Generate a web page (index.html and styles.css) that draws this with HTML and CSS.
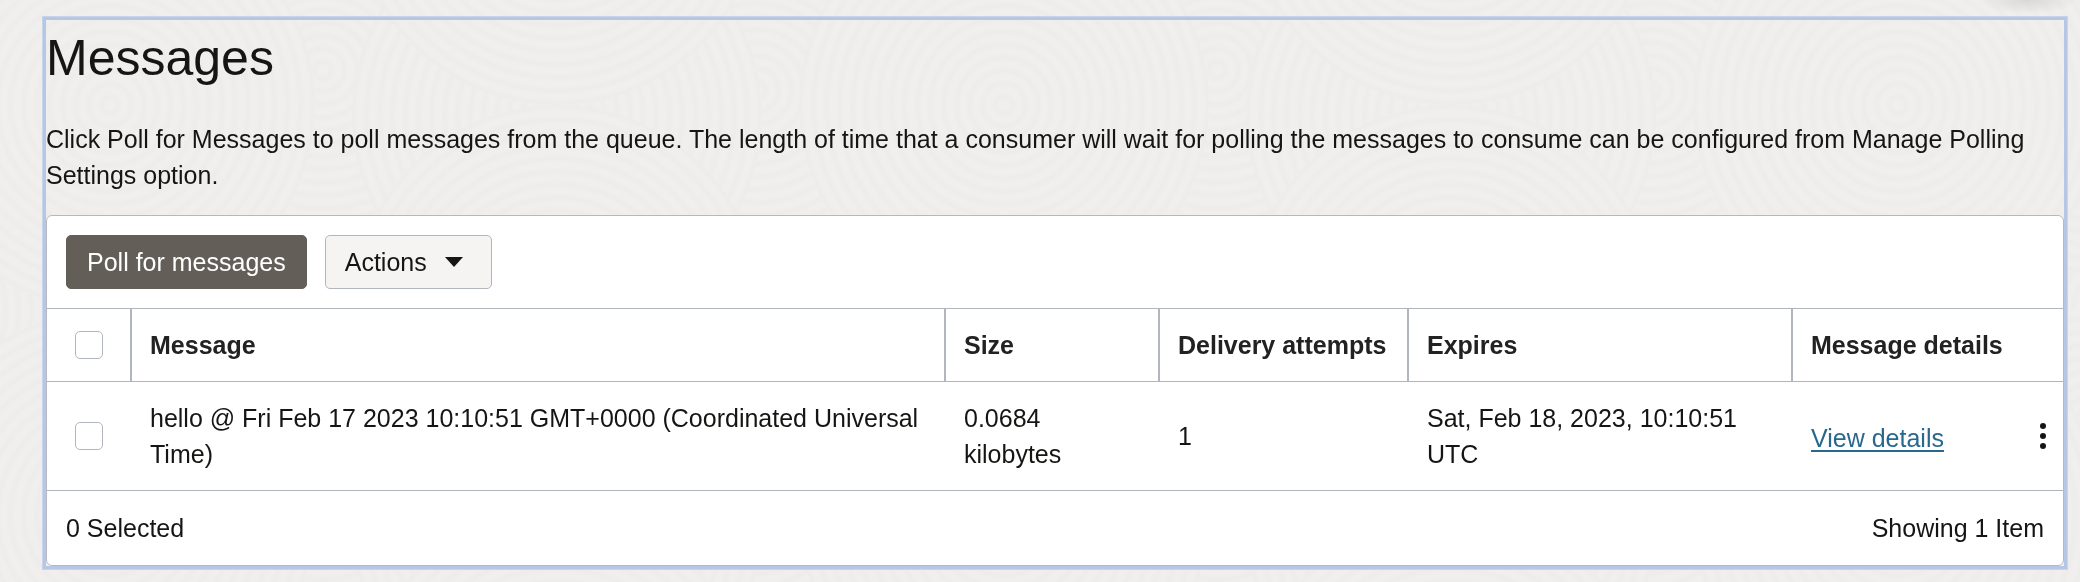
FILE: index.html
```html
<!DOCTYPE html>
<html lang="en">
<head>
<meta charset="utf-8">
<title>Messages</title>
<link rel="stylesheet" href="styles.css">
</head>
<body>
<svg class="texture" aria-hidden="true">
  <defs>
    <radialGradient id="ring" gradientUnits="userSpaceOnUse" cx="0" cy="0" r="13" spreadMethod="repeat">
      <stop offset="0" stop-color="#f0efed"/>
      <stop offset="0.3" stop-color="#f0efed"/>
      <stop offset="0.65" stop-color="#edecea"/>
      <stop offset="1" stop-color="#f0efed"/>
    </radialGradient>
    <radialGradient id="shade">
      <stop offset="0" stop-color="#d9d8d8"/>
      <stop offset="1" stop-color="#d9d8d8" stop-opacity="0"/>
    </radialGradient>
    <circle id="disc" r="205" fill="url(#ring)"/>
    <pattern id="waves" patternUnits="userSpaceOnUse" x="557" y="-100" width="894" height="410">
      <rect width="894" height="410" fill="#f0efed"/>
      <use href="#disc" x="230" y="0"/>
      <use href="#disc" x="670" y="0"/>
      <use href="#disc" x="230" y="410"/>
      <use href="#disc" x="670" y="410"/>
      <use href="#disc" x="660" y="170"/>
      <use href="#disc" x="200" y="190"/>
      <use href="#disc" x="0" y="215"/>
      <use href="#disc" x="894" y="215"/>
      <use href="#disc" x="447" y="205"/>
      <use href="#disc" x="0" y="0"/>
      <use href="#disc" x="894" y="0"/>
      <use href="#disc" x="0" y="410"/>
      <use href="#disc" x="894" y="410"/>
    </pattern>
  </defs>
  <rect width="100%" height="100%" fill="url(#waves)"/>
  <ellipse cx="97.5%" cy="0" rx="50" ry="14" fill="url(#shade)"/>
</svg>
<main class="panel">
  <h1 class="title">Messages</h1>
  <p class="intro">Click Poll for Messages to poll messages from the queue. The length of time that a consumer will wait for polling the messages to consume can be configured from Manage Polling Settings option.</p>
  <section class="card">
    <div class="toolbar">
      <button class="btn btn-primary" type="button">Poll for messages</button>
      <button class="btn btn-menu" type="button">Actions
        <svg class="caret" viewBox="0 0 18 10" aria-hidden="true"><path d="M0 0H18L9 10Z"/></svg>
      </button>
    </div>
    <table class="messages">
      <colgroup>
        <col class="col-check"><col><col class="col-size"><col class="col-attempts"><col class="col-expires"><col class="col-details"><col class="col-menu">
      </colgroup>
      <thead>
        <tr>
          <th class="check-cell"><input class="check" type="checkbox" aria-label="Select all messages"></th>
          <th>Message</th>
          <th>Size</th>
          <th>Delivery attempts</th>
          <th>Expires</th>
          <th colspan="2">Message details</th>
        </tr>
      </thead>
      <tbody>
        <tr>
          <td class="check-cell"><input class="check" type="checkbox" aria-label="Select message"></td>
          <td>hello @ Fri Feb 17 2023 10:10:51 GMT+0000 (Coordinated Universal Time)</td>
          <td>0.0684 kilobytes</td>
          <td>1</td>
          <td>Sat, Feb 18, 2023, 10:10:51 UTC</td>
          <td class="link-cell"><a class="link" href="#details">View details</a></td>
          <td class="menu-cell"><button class="row-menu" type="button" aria-label="Message actions"><svg class="dots" viewBox="0 0 6 26" aria-hidden="true"><circle cx="3" cy="3" r="3"/><circle cx="3" cy="13" r="3"/><circle cx="3" cy="23" r="3"/></svg></button></td>
        </tr>
      </tbody>
    </table>
    <div class="footer"><span>0 Selected</span><span>Showing 1 Item</span></div>
  </section>
</main>
</body>
</html>
```
FILE: styles.css
```css
* { box-sizing: border-box; }
body {
  margin: 0;
  padding: 17px 13px 12px 43px;
  background: #f0efed;
  color: #161513;
  font: 25px/36px "Liberation Sans", Arial, sans-serif;
}
.texture { position: fixed; inset: 0; z-index: -1; width: 100%; height: 100%; }
.panel { border: 3px solid #b5c7e5; box-shadow: 0 0 0 1px #c7d4ea; }
.title { margin: 0; padding-top: 8px; font-size: 50px; line-height: 60px; font-weight: 400; }
.intro { margin: 33px 0 22px; }
.card { background: #fff; border: 1px solid #b5b8c2; border-radius: 6px; }
.toolbar { display: flex; gap: 18px; padding: 19px; }
.btn { height: 54px; padding: 0 20px; border: 1px solid #645e59; border-radius: 5px; font: inherit; }
.btn-primary { background: #645e59; color: #fff; }
.btn-menu { display: flex; align-items: center; gap: 18px; padding: 0 28px 0 19px; background: #f5f4f2; border-color: #b1b6be; color: #161513; }
.caret { width: 18px; height: 10px; fill: #161513; }
.messages { width: 100%; table-layout: fixed; border-collapse: separate; border-spacing: 0; border-top: 1px solid #b1b6be; }
.col-check { width: 85px; }
.col-size { width: 214px; }
.col-attempts { width: 249px; }
.col-expires { width: 384px; }
.col-details { width: 210px; }
.col-menu { width: 60px; }
th, td { padding: 18px; border-bottom: 1px solid #b1b6be; text-align: left; vertical-align: middle; }
th { color: #222; white-space: nowrap; }
th:not(:last-child) { border-right: 2px solid #b1b6be; }
.check-cell { padding: 0 0 0 28px; }
.check { display: block; appearance: none; width: 28px; height: 28px; margin: 0; border: 1px solid #b1b6be; border-radius: 5px; background: #fff; }
.link-cell { padding-top: 22px; }
.link { color: #28688f; text-decoration-thickness: 2px; text-underline-offset: 3px; }
.menu-cell { padding: 0; }
.row-menu { display: block; margin-left: auto; padding: 10px 17px; border: 0; background: none; }
.dots { display: block; width: 6px; height: 26px; fill: #161513; }
.footer { display: flex; justify-content: space-between; padding: 19px; }
```
